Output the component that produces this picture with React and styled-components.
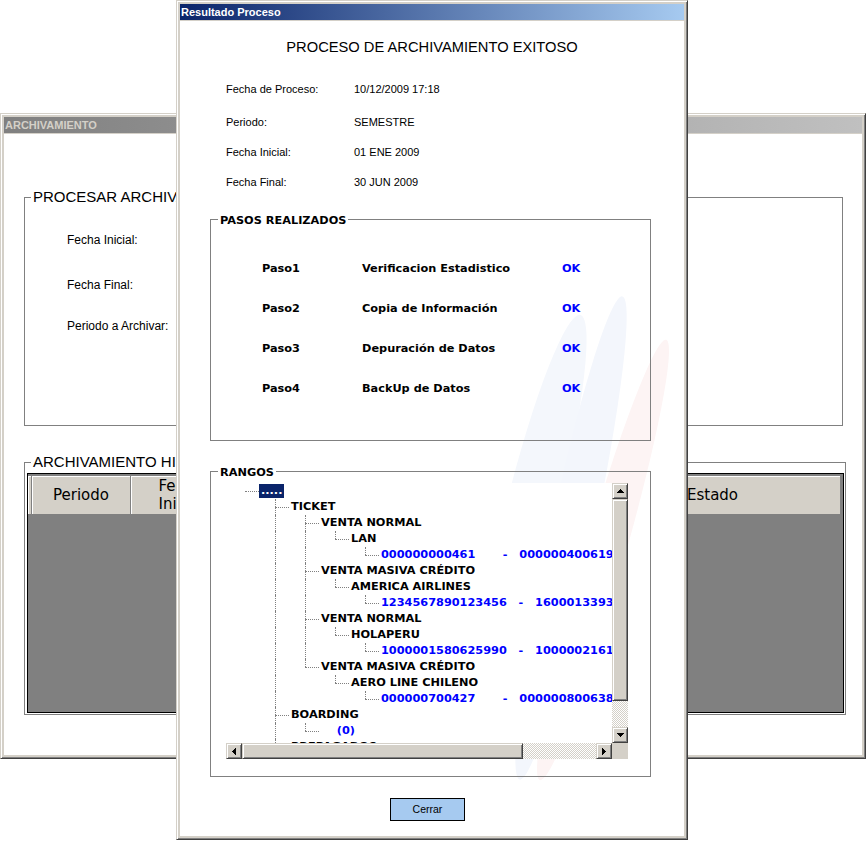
import React from 'react';
import styled, { createGlobalStyle } from 'styled-components';

const GlobalStyle = createGlobalStyle`
  html, body { margin: 0; padding: 0; background: #fff; }
  body { width: 866px; height: 842px; overflow: hidden; font-family: "Liberation Sans", Arial, sans-serif; }
  *, *::before, *::after { box-sizing: border-box; }
`;

const Desktop = styled.div`
  position: relative;
  width: 866px;
  height: 842px;
  background: #fff;
  overflow: hidden;
`;

const Window = styled.div`
  position: absolute;
  left: ${p => p.$x}px;
  top: ${p => p.$y}px;
  width: ${p => p.$w}px;
  height: ${p => p.$h}px;
  display: flex;
  flex-direction: column;
  background: #d4d0c8;
  border: 1px solid;
  border-color: #d4d0c8 #404040 #404040 #d4d0c8;
  box-shadow: inset 1px 1px #fff, inset -1px -1px #808080;
  padding: 3px;
`;

const TitleBar = styled.div`
  flex: none;
  height: 16px;
  margin-bottom: 1px;
  padding-left: 1px;
  background: ${p => (p.$active
    ? 'linear-gradient(90deg, #0a246a 0%, #a6caf0 100%)'
    : 'linear-gradient(90deg, #808080 0%, #c0c0c0 100%)')};
  color: ${p => (p.$active ? '#fff' : '#d4d0c8')};
  font: bold 11px/16px "Liberation Sans", Arial, sans-serif;
  white-space: nowrap;
  overflow: hidden;
`;

const Client = styled.div`
  position: relative;
  isolation: isolate;
  flex: 1;
  display: flex;
  flex-direction: column;
  background: #fff;
  overflow: hidden;
`;

/* ---------- group boxes ---------- */
const Group = styled.fieldset`
  flex: none;
  margin: 0;
  min-width: 0;
  border: 1px solid #808080;
  padding: 0;
`;

const Legend = styled.legend`
  margin-left: 7px;
  padding: 0 2px;
  height: 14px;
  font: bold 11.3px/18px "DejaVu Sans", sans-serif;
  color: #000;
`;

const BigLegend = styled.legend`
  margin-left: 6px;
  padding: 0 2px;
  font: 15px/18px "Liberation Sans", Arial, sans-serif;
  color: #000;
  white-space: nowrap;
`;

/* ---------- background window ---------- */
const ProcGroup = styled(Group)`
  margin: 54px 0 0 20px;
  width: 819px;
  height: 238px;
`;

const LabelStack = styled.div`
  padding: 27px 0 0 42px;
  display: flex;
  flex-direction: column;
`;

const FieldLabel = styled.div`
  margin-top: ${p => p.$mt || 0}px;
  font: 12px/14px "Liberation Sans", Arial, sans-serif;
  color: #000;
`;

const HistGroup = styled(Group)`
  margin: 27px 0 0 20px;
  width: 822px;
  height: 262px;
`;

const DataGrid = styled.div`
  margin: 2px 0 0 2px;
  width: 817px;
  height: 240px;
  background: #808080;
  border: 1px solid #000;
  padding-top: 2px;
`;

const GridHeader = styled.div`
  display: flex;
  height: 38px;
`;

const HeaderCell = styled.div`
  flex: none;
  width: ${p => p.$w}px;
  display: flex;
  align-items: center;
  justify-content: center;
  text-align: center;
  background: #d4d0c8;
  border-right: 1px solid #808080;
  box-shadow: inset 1px 1px #fff;
  font: 15px/18px "DejaVu Sans", sans-serif;
  color: #000;
  overflow: hidden;
`;

/* ---------- dialog ---------- */
const Watermark = styled.svg`
  position: absolute;
  left: 0;
  top: 0;
  z-index: -1;
  pointer-events: none;
`;

const Heading = styled.div`
  margin-top: 18px;
  text-align: center;
  font: 14.7px/16px "Liberation Sans", Arial, sans-serif;
  color: #000;
`;

const InfoList = styled.div`
  margin-top: 27px;
  padding-left: 46px;
  display: flex;
  flex-direction: column;
`;

const InfoRow = styled.div`
  display: grid;
  grid-template-columns: 128px 1fr;
  height: 14px;
  margin-top: ${p => p.$mt || 0}px;
  font: 11px/14px "Liberation Sans", Arial, sans-serif;
  color: #000;
`;

const PasosGroup = styled(Group)`
  margin: 23px 0 0 30px;
  width: 441px;
  height: 229px;
`;

const StepGrid = styled.div`
  padding: 23px 0 0 51px;
  display: grid;
  grid-template-columns: 100px 200px 1fr;
  grid-auto-rows: 40px;
  align-items: center;
  font: bold 11.3px/14px "DejaVu Sans", sans-serif;
  color: #000;
`;

const Ok = styled.span`
  color: #0000ff;
`;

const RangosGroup = styled(Group)`
  margin: 23px 0 0 30px;
  width: 441px;
  height: 313px;
`;

const Tree = styled.div`
  margin: 5px 0 0 15px;
  width: 402px;
  height: 276px;
  background: #fff;
  display: grid;
  grid-template-columns: 386px 16px;
  grid-template-rows: 260px 16px;
`;

const TreeView = styled.div`
  overflow: hidden;
  padding-left: 4px;
`;

const TreeRow = styled.div`
  display: flex;
  height: 16px;
  white-space: pre;
`;

const Guide = styled.span`
  position: relative;
  flex: none;
  width: 30px;
  height: 16px;
  &::before {
    content: '';
    position: absolute;
    left: 15px;
    top: 0;
    border-left: 1px dotted #808080;
    height: ${p => (p.$kind === 'ell' ? '8px' : '16px')};
    display: ${p => (['pipe', 'tee', 'ell'].includes(p.$kind) ? 'block' : 'none')};
  }
  &::after {
    content: '';
    position: absolute;
    left: 15px;
    top: 8px;
    width: 14px;
    border-top: 1px dotted #808080;
    display: ${p => (['tee', 'ell', 'stub'].includes(p.$kind) ? 'block' : 'none')};
  }
`;

const NodeLabel = styled.span`
  flex: none;
  align-self: center;
  height: 14px;
  margin-left: -1px;
  padding: 0 2px;
  font: bold 11.3px/14px "DejaVu Sans", sans-serif;
  color: ${p => (p.$sel ? '#fff' : p.$blue ? '#0000ff' : '#000')};
  background: ${p => (p.$sel ? '#0a246a' : 'transparent')};
`;

const ScrollV = styled.div`
  display: flex;
  flex-direction: column;
`;

const ScrollH = styled.div`
  display: flex;
`;

const SBtn = styled.div`
  flex: none;
  width: 16px;
  height: 16px;
  display: flex;
  align-items: center;
  justify-content: center;
  background: #d4d0c8;
  border: 1px solid;
  border-color: #d4d0c8 #404040 #404040 #d4d0c8;
  box-shadow: inset 1px 1px #fff, inset -1px -1px #808080;
`;

const Thumb = styled(SBtn)`
  width: ${p => (p.$len && p.$horiz ? `${p.$len}px` : '16px')};
  height: ${p => (p.$len && !p.$horiz ? `${p.$len}px` : '16px')};
`;

const Track = styled.div`
  flex: 1;
  background: repeating-conic-gradient(#d4d0c8 0 25%, #fff 0 50%) 0 0 / 2px 2px;
`;

const Corner = styled.div`
  background: #d4d0c8;
`;

const ButtonRow = styled.div`
  margin-top: 21px;
  padding-left: 210px;
  display: flex;
`;

const CloseButton = styled.button`
  width: 75px;
  height: 23px;
  padding: 0;
  background: #a6caf0;
  border: 1px solid #000;
  border-radius: 0;
  font: 10.5px/21px "Liberation Sans", Arial, sans-serif;
  color: #000;
`;

/* ---------- icons ---------- */
const arrows = {
  up: 'M3 0h1v1h-1z M2 1h3v1h-3z M1 2h5v1h-5z M0 3h7v1h-7z',
  down: 'M0 0h7v1h-7z M1 1h5v1h-5z M2 2h3v1h-3z M3 3h1v1h-1z',
  left: 'M3 0h1v7h-1z M2 1h1v5h-1z M1 2h1v3h-1z M0 3h1v1h-1z',
  right: 'M0 0h1v7h-1z M1 1h1v5h-1z M2 2h1v3h-1z M3 3h1v1h-1z',
};

const Arrow = ({ dir }) => {
  const vert = dir === 'up' || dir === 'down';
  return (
    <svg width={vert ? 7 : 4} height={vert ? 4 : 7} shapeRendering="crispEdges">
      <path d={arrows[dir]} fill="#000" />
    </svg>
  );
};

/* ---------- data ---------- */
const columns = [
  { w: 4, label: '' },
  { w: 99, label: 'Periodo' },
  { w: 100, label: <>Fecha<br />Inicial</> },
  { w: 100, label: <>Fecha<br />Final</> },
  { w: 120, label: <>Fecha<br />Proceso</> },
  { w: 134, label: 'Usuario' },
  { w: 256, label: 'Estado' },
];

const info = [
  ['Fecha de Proceso:', '10/12/2009 17:18', 0],
  ['Periodo:', 'SEMESTRE', 19],
  ['Fecha Inicial:', '01 ENE 2009', 16],
  ['Fecha Final:', '30 JUN 2009', 16],
];

const steps = [
  ['Paso1', 'Verificacion Estadistico'],
  ['Paso2', 'Copia de Información'],
  ['Paso3', 'Depuración de Datos'],
  ['Paso4', 'BackUp de Datos'],
];

const treeData = [
  { l: 0, t: '.....', sel: true },
  { l: 1, t: 'TICKET' },
  { l: 2, t: 'VENTA NORMAL' },
  { l: 3, t: 'LAN' },
  { l: 4, t: '000000000461       -   000000400619', blue: true },
  { l: 2, t: 'VENTA MASIVA CRÉDITO' },
  { l: 3, t: 'AMERICA AIRLINES' },
  { l: 4, t: '1234567890123456   -   1600013393000000', blue: true },
  { l: 2, t: 'VENTA NORMAL' },
  { l: 3, t: 'HOLAPERU' },
  { l: 4, t: '1000001580625990   -   1000002161000000', blue: true },
  { l: 2, t: 'VENTA MASIVA CRÉDITO' },
  { l: 3, t: 'AERO LINE CHILENO' },
  { l: 4, t: '000000700427       -   000000800638', blue: true },
  { l: 1, t: 'BOARDING' },
  { l: 2, t: '    (0)', blue: true },
  { l: 1, t: 'PREPAGADOS' },
  { l: 2, t: '    (0)', blue: true },
  { l: 1, t: 'OTROS' },
];

const hasNext = idx => {
  const L = treeData[idx].l;
  for (let j = idx + 1; j < treeData.length; j++) {
    if (treeData[j].l < L) return false;
    if (treeData[j].l === L) return true;
  }
  return false;
};

const guidesFor = i => {
  const lvl = treeData[i].l;
  const anc = [];
  let cur = lvl;
  for (let j = i - 1; j >= 0 && cur > 0; j--) {
    if (treeData[j].l < cur) {
      anc[treeData[j].l] = j;
      cur = treeData[j].l;
    }
  }
  const g = [];
  for (let k = 0; k <= lvl; k++) {
    if (k === lvl) g.push(lvl === 0 ? 'stub' : hasNext(i) ? 'tee' : 'ell');
    else g.push(k === 0 ? 'none' : hasNext(anc[k]) ? 'pipe' : 'none');
  }
  return g;
};

/* watermark leaves in dialog client coordinates (client origin = 180, 21) */
const leaves = [
  { cx: 352, cy: 488, rx: 26, ry: 200, a: 14, c: '#f4f7fc' },
  { cx: 391, cy: 517, rx: 22, ry: 247, a: 12, c: '#f3f6fc' },
  { cx: 423, cy: 539, rx: 20, ry: 229, a: 16, c: '#fdf4f4' },
];

export default function App() {
  return (
    <>
      <GlobalStyle />
      <Desktop>
        <Window $x={0} $y={113} $w={866} $h={646}>
          <TitleBar>ARCHIVAMIENTO</TitleBar>
          <Client>
            <ProcGroup>
              <BigLegend>PROCESAR ARCHIVAMIENTO</BigLegend>
              <LabelStack>
                <FieldLabel>Fecha Inicial:</FieldLabel>
                <FieldLabel $mt={31}>Fecha Final:</FieldLabel>
                <FieldLabel $mt={27}>Periodo a Archivar:</FieldLabel>
              </LabelStack>
            </ProcGroup>
            <HistGroup>
              <BigLegend>ARCHIVAMIENTO HISTÓRICO</BigLegend>
              <DataGrid>
                <GridHeader>
                  {columns.map((c, i) => (
                    <HeaderCell key={i} $w={c.w}>{c.label}</HeaderCell>
                  ))}
                </GridHeader>
              </DataGrid>
            </HistGroup>
          </Client>
        </Window>

        <Window $x={176} $y={0} $w={512} $h={840}>
          <TitleBar $active>Resultado Proceso</TitleBar>
          <Client>
            <Watermark width="504" height="815" viewBox="0 0 504 815">
              {leaves.map((lf, i) => (
                <ellipse
                  key={i}
                  cx={lf.cx}
                  cy={lf.cy}
                  rx={lf.rx}
                  ry={lf.ry}
                  fill={lf.c}
                  transform={`rotate(${lf.a} ${lf.cx} ${lf.cy})`}
                />
              ))}
            </Watermark>
            <Heading>PROCESO DE ARCHIVAMIENTO EXITOSO</Heading>
            <InfoList>
              {info.map(([k, v, mt]) => (
                <InfoRow key={k} $mt={mt}>
                  <span>{k}</span>
                  <span>{v}</span>
                </InfoRow>
              ))}
            </InfoList>
            <PasosGroup>
              <Legend>PASOS REALIZADOS</Legend>
              <StepGrid>
                {steps.map(([p, d]) => (
                  <React.Fragment key={p}>
                    <span>{p}</span>
                    <span>{d}</span>
                    <Ok>OK</Ok>
                  </React.Fragment>
                ))}
              </StepGrid>
            </PasosGroup>
            <RangosGroup>
              <Legend>RANGOS</Legend>
              <Tree>
                <TreeView>
                  {treeData.map((n, i) => (
                    <TreeRow key={i}>
                      {guidesFor(i).map((k, j) => (
                        <Guide key={j} $kind={k} />
                      ))}
                      <NodeLabel $sel={n.sel} $blue={n.blue}>{n.t}</NodeLabel>
                    </TreeRow>
                  ))}
                </TreeView>
                <ScrollV>
                  <SBtn><Arrow dir="up" /></SBtn>
                  <Thumb $len={202} />
                  <Track />
                  <SBtn><Arrow dir="down" /></SBtn>
                </ScrollV>
                <ScrollH>
                  <SBtn><Arrow dir="left" /></SBtn>
                  <Thumb $horiz $len={281} />
                  <Track />
                  <SBtn><Arrow dir="right" /></SBtn>
                </ScrollH>
                <Corner />
              </Tree>
            </RangosGroup>
            <ButtonRow>
              <CloseButton>Cerrar</CloseButton>
            </ButtonRow>
          </Client>
        </Window>
      </Desktop>
    </>
  );
}
